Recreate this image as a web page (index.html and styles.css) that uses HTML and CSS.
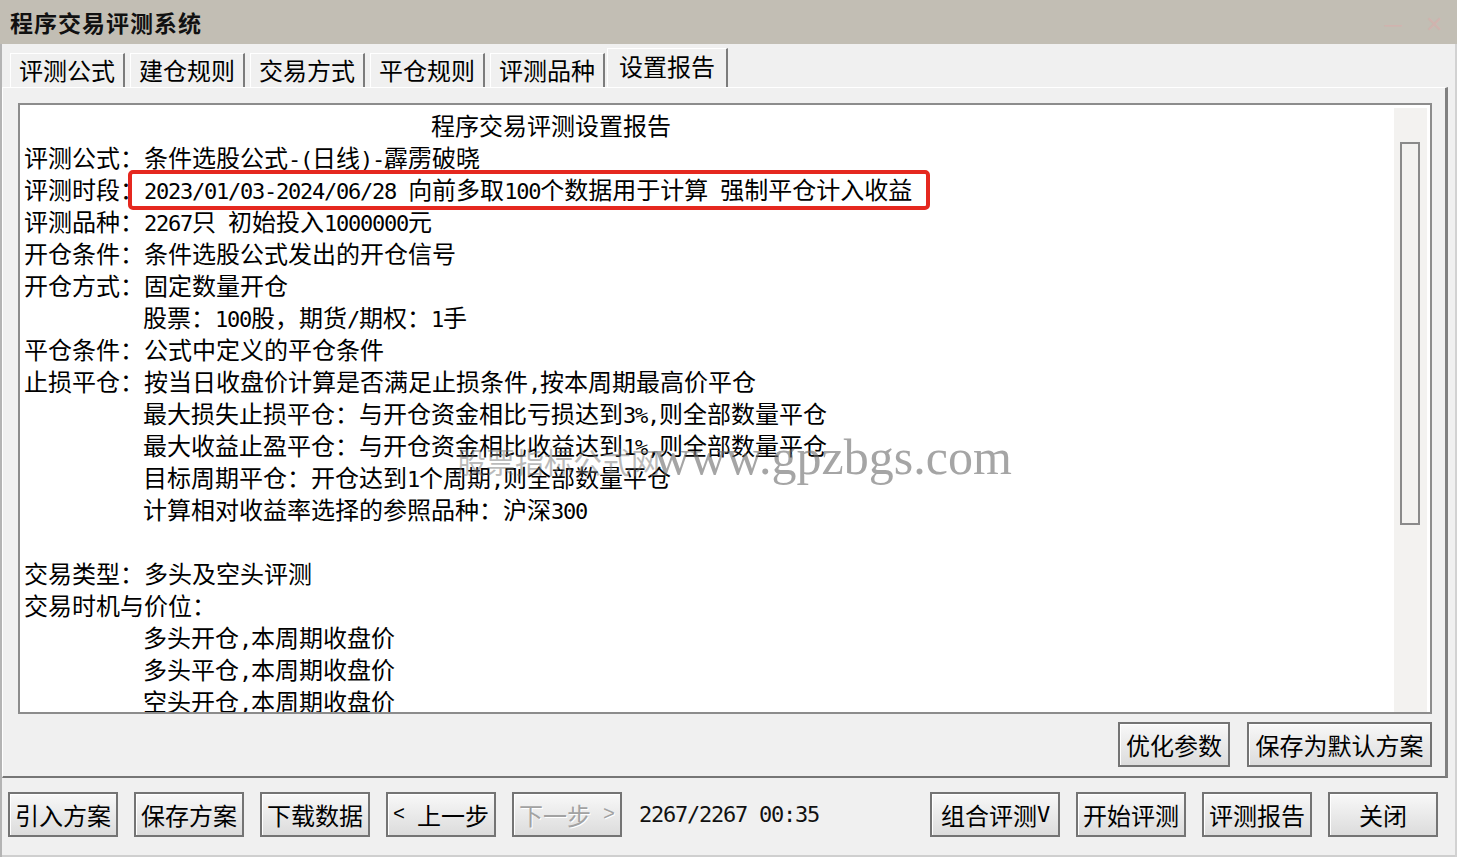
FILE: index.html
```html
<!DOCTYPE html>
<html lang="zh-CN">
<head>
<meta charset="utf-8">
<title>程序交易评测系统</title>
<link rel="stylesheet" href="styles.css">
</head>
<body>
<div class="window">
  <div class="titlebar">
    <span class="title">程序交易评测系统</span>
    <span class="winctl"><span>—</span><span>✕</span></span>
  </div>
  <div class="client">
    <div class="tabs">
      <div class="tab">评测公式</div>
      <div class="tab">建仓规则</div>
      <div class="tab">交易方式</div>
      <div class="tab">平仓规则</div>
      <div class="tab">评测品种</div>
      <div class="tab active">设置报告</div>
    </div>
    <div class="panel">
      <div class="report-box">
        <div class="report">
          <div class="line head">程序交易评测设置报告</div>
          <div class="line">评测公式：条件选股公式<span class="h">-(</span>日线<span class="h">)-</span>霹雳破晓</div>
          <div class="line">评测时段：<span class="h">2023/01/03-2024/06/28 </span>向前多取<span class="h">100</span>个数据用于计算<span class="h"> </span>强制平仓计入收益</div>
          <div class="line">评测品种：<span class="h">2267</span>只<span class="h"> </span>初始投入<span class="h">1000000</span>元</div>
          <div class="line">开仓条件：条件选股公式发出的开仓信号</div>
          <div class="line">开仓方式：固定数量开仓</div>
          <div class="line ind">股票：<span class="h">100</span>股，期货<span class="h">/</span>期权：<span class="h">1</span>手</div>
          <div class="line">平仓条件：公式中定义的平仓条件</div>
          <div class="line">止损平仓：按当日收盘价计算是否满足止损条件<span class="h">,</span>按本周期最高价平仓</div>
          <div class="line ind">最大损失止损平仓：与开仓资金相比亏损达到<span class="h">3%,</span>则全部数量平仓</div>
          <div class="line ind">最大收益止盈平仓：与开仓资金相比收益达到<span class="h">1%,</span>则全部数量平仓</div>
          <div class="line ind">目标周期平仓：开仓达到<span class="h">1</span>个周期<span class="h">,</span>则全部数量平仓</div>
          <div class="line ind">计算相对收益率选择的参照品种：沪深<span class="h">300</span></div>
          <div class="line blank"></div>
          <div class="line">交易类型：多头及空头评测</div>
          <div class="line">交易时机与价位：</div>
          <div class="line ind">多头开仓<span class="h">,</span>本周期收盘价</div>
          <div class="line ind">多头平仓<span class="h">,</span>本周期收盘价</div>
          <div class="line ind">空头开仓<span class="h">,</span>本周期收盘价</div>
        </div>
        <div class="vscroll"><div class="thumb"></div></div>
        <div class="watermark"><span class="wm-cjk">股票指标公式网</span>www.gpzbgs.com</div>
        <div class="highlight"></div>
      </div>
      <div class="panel-actions">
        <button class="btn w112">优化参数</button>
        <button class="btn w185">保存为默认方案</button>
      </div>
    </div>
    <div class="bottom">
      <div class="group">
        <button class="btn">引入方案</button>
        <button class="btn">保存方案</button>
        <button class="btn">下载数据</button>
        <button class="btn"><span class="arrow">&lt; </span>上一步</button>
        <button class="btn disabled">下一步<span class="arrow"> &gt;</span></button>
      </div>
      <div class="status">2267/2267 00:35</div>
      <div class="group right">
        <button class="btn w130">组合评测<span class="h">V</span></button>
        <button class="btn">开始评测</button>
        <button class="btn">评测报告</button>
        <button class="btn">关闭</button>
      </div>
    </div>
  </div>
</div>
</body>
</html>
```
FILE: styles.css
```css
html, body {
  margin: 0;
  padding: 0;
}
body {
  width: 1457px;
  height: 857px;
  overflow: hidden;
  font-family: "Noto Sans CJK SC", "Noto Sans", sans-serif;
  color: #000;
  background: #f0f0f0;
}
.window {
  width: 1457px;
  height: 857px;
  display: flex;
  flex-direction: column;
}
.titlebar {
  height: 44px;
  flex: none;
  background: #c2beb4;
  display: flex;
  align-items: center;
  padding: 0 14px 0 10px;
}
.title {
  font-weight: bold;
  font-size: 23px;
  letter-spacing: 1px;
  line-height: 1;
  color: #111;
}
.winctl {
  margin-left: auto;
  display: flex;
  gap: 22px;
  color: #d0b3ae;
  font-size: 22px;
  line-height: 1;
}
.client {
  flex: 1;
  display: flex;
  flex-direction: column;
  background: #f0f0f0;
  border-left: 2px solid #b4b4b4;
  border-right: 2px solid #d2d2d2;
}
.tabs {
  height: 43px;
  flex: none;
  display: flex;
  align-items: flex-end;
  padding-left: 8px;
}
.tab {
  height: 34px;
  box-sizing: border-box;
  border-left: 1px solid #fff;
  border-top: 1px solid #fff;
  border-right: 2px solid #7c7c7c;
  padding: 0 8px;
  margin-right: 5px;
  font-size: 24px;
  line-height: 32px;
  white-space: nowrap;
}
.tab.active {
  height: 39px;
  margin-left: -3px;
  padding: 0 11px;
  line-height: 34px;
}
.panel {
  flex: none;
  margin-right: 7px;
  border-top: 1px solid #fff;
  border-left: 1px solid #fff;
  border-right: 3px solid #808080;
  border-bottom: 2px solid #767676;
  padding: 15px 13px 9px 15px;
  display: flex;
  flex-direction: column;
}
.report-box {
  height: 611px;
  box-sizing: border-box;
  border: 2px solid #8c8c8c;
  background: #fff;
  display: flex;
  position: relative;
}
.report {
  flex: 1;
  padding: 4px 0 0 4px;
  overflow: hidden;
  font-size: 24px;
  line-height: 32px;
}
.line {
  height: 32px;
  white-space: nowrap;
}
.line.head {
  padding-left: 407px;
}
.line.ind {
  padding-left: 119px;
}
.h {
  font-family: "DejaVu Sans Mono", "Liberation Mono", monospace;
  font-size: 22px;
  letter-spacing: -1.24px;
  white-space: pre;
}
.arrow {
  font-family: "Liberation Mono", monospace;
  font-size: 20px;
  white-space: pre;
}
.vscroll {
  width: 33px;
  margin: 3px 3px 0 0;
  background: #f3f2f0;
}
.thumb {
  width: 20px;
  height: 383px;
  margin: 34px 0 0 6px;
  box-sizing: border-box;
  border: 2px solid #8a8a8a;
}
.watermark {
  position: absolute;
  left: 437px;
  top: 327px;
  font-family: "Liberation Serif", serif;
  font-size: 50px;
  line-height: 1;
  color: rgba(110, 110, 110, 0.62);
  white-space: nowrap;
  pointer-events: none;
}
.wm-cjk {
  font-family: "Noto Sans CJK SC", sans-serif;
  font-size: 29px;
  margin-right: -6px;
  color: rgba(120, 120, 120, 0.5);
}
.highlight {
  position: absolute;
  left: 108px;
  top: 65px;
  width: 802px;
  height: 40px;
  box-sizing: border-box;
  border: 4px solid #e5281f;
  border-radius: 5px;
}
.panel-actions {
  margin-top: 8px;
  display: flex;
  justify-content: flex-end;
  gap: 17px;
}
.btn {
  width: 110px;
  height: 45px;
  box-sizing: border-box;
  padding: 0;
  margin: 0;
  border: 2px solid #747474;
  background: linear-gradient(#f8f8f8, #dcdcdc);
  box-shadow: inset 1px 1px 0 #fff;
  font-family: "Noto Sans CJK SC", sans-serif;
  font-size: 24px;
  line-height: 1;
  color: #000;
  display: flex;
  align-items: center;
  justify-content: center;
  white-space: nowrap;
}
.btn.w112 { width: 112px; }
.btn.w185 { width: 185px; }
.btn.w130 { width: 130px; }
.btn.disabled {
  color: #a2a2a2;
  text-shadow: 1px 1px 0 #fff;
}
.bottom {
  flex: 1;
  display: flex;
  align-items: flex-start;
  padding: 14px 17px 0 6px;
  border-bottom: 2px solid #cfcfcf;
}
.group {
  display: flex;
  gap: 16px;
}
.group.right {
  margin-left: auto;
}
.status {
  margin-left: 17px;
  height: 45px;
  display: flex;
  align-items: center;
  font-family: "DejaVu Sans Mono", "Liberation Mono", monospace;
  font-size: 22px;
  letter-spacing: -1.24px;
  color: #111;
  white-space: pre;
}
```
